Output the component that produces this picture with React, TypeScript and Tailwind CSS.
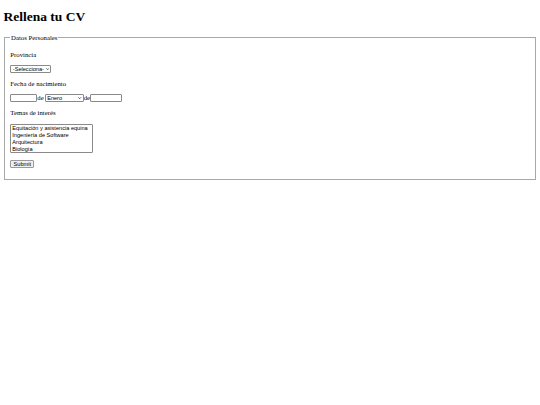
import React from "react";

const months = [
  "Enero", "Febrero", "Marzo", "Abril", "Mayo", "Junio", "Julio",
  "Agosto", "Septiembre", "Octubre", "Noviembre", "Diciembre",
];

function Chevron() {
  return (
    <svg
      viewBox="0 0 8 5"
      className="pointer-events-none absolute right-[2px] top-1/2 h-[2.2px] w-[3.4px] -translate-y-1/2"
    >
      <path d="M1 1 L4 4 L7 1" fill="none" stroke="#000" strokeWidth="1.6" />
    </svg>
  );
}

export default function App() {
  return (
    <div className="min-h-[405px] w-[540px] bg-white px-[3.4px] pt-px font-['Liberation_Serif',serif] text-[6.75px] text-black">
      <h1 className="mb-[9.05px] mt-[8.05px] text-[13.5px] font-bold leading-[15.5px]">Rellena tu CV</h1>
      <form>
        <fieldset className="mx-[0.84px] border border-[#a8a8a8] px-[5.06px] pb-[4.22px] pt-[2.4px]">
          <legend className="px-[0.84px] leading-[7.8px]">Datos Personales</legend>
          <p className="my-[6.75px] leading-[7.8px]">Provincia</p>
          <div className="my-[6.75px] flex">
            <div className="relative">
              <select className="block h-[8px] w-[41px] appearance-none rounded-[1px] border border-[#8a8a8a] bg-white pl-[1.5px] font-['Liberation_Sans',sans-serif] text-[5.625px] leading-[6px]">
                <option>-Selecciona-</option>
              </select>
              <Chevron />
            </div>
          </div>
          <p className="my-[6.75px] leading-[7.8px]">Fecha de nacimiento</p>
          <div className="my-[6.75px] flex items-center leading-[7.8px]">
            <input type="text" className="h-[8px] w-[27px] rounded-[1px] border border-[#8a8a8a] bg-white" />
            <span>de</span>
            <div className="relative ml-[1px]">
              <select className="block h-[8px] w-[39px] appearance-none rounded-[1px] border border-[#8a8a8a] bg-white pl-[1.5px] font-['Liberation_Sans',sans-serif] text-[5.625px] leading-[6px]">
                {months.map((m) => (
                  <option key={m}>{m}</option>
                ))}
              </select>
              <Chevron />
            </div>
            <span>de</span>
            <input type="text" className="h-[8px] w-[32px] rounded-[1px] border border-[#8a8a8a] bg-white" />
          </div>
          <p className="my-[6.75px] leading-[7.8px]">Temas de interés</p>
          <div className="my-[6.75px] flex">
            <div className="flex h-[29.5px] w-[83px] flex-col rounded-[1px] border border-[#8a8a8a] bg-white pt-[0.5px] font-['Liberation_Sans',sans-serif] text-[5.625px] leading-[6.8px]">
              <span className="px-[1px]">Equitación y asistencia equina</span>
              <span className="px-[1px]">Ingeniería de Software</span>
              <span className="px-[1px]">Arquitectura</span>
              <span className="px-[1px]">Biología</span>
            </div>
          </div>
          <div className="my-[6.75px] flex">
            <button
              type="button"
              className="h-[8.5px] w-[24px] rounded-[1px] border border-[#9a9a9a] bg-[#efefef] font-['Liberation_Sans',sans-serif] text-[5.625px] leading-[6px]"
            >
              Submit
            </button>
          </div>
        </fieldset>
      </form>
    </div>
  );
}
